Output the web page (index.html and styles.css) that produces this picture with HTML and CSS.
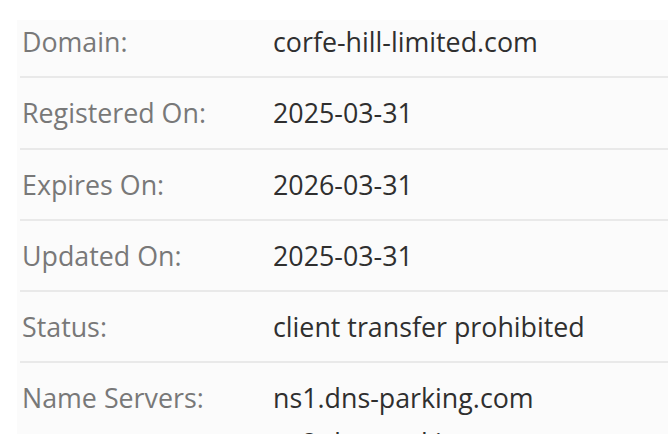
FILE: index.html
```html
<!DOCTYPE html>
<html>
<head>
<meta charset="utf-8">
<link rel="stylesheet" href="styles.css">
</head>
<body>
<div class="panel">
  <div class="row first">
    <div class="label">Domain:</div>
    <div class="value">corfe-hill-limited.com</div>
  </div>
  <div class="row">
    <div class="label">Registered On:</div>
    <div class="value">2025-03-31</div>
  </div>
  <div class="row">
    <div class="label">Expires On:</div>
    <div class="value">2026-03-31</div>
  </div>
  <div class="row">
    <div class="label">Updated On:</div>
    <div class="value">2025-03-31</div>
  </div>
  <div class="row">
    <div class="label">Status:</div>
    <div class="value">client transfer prohibited</div>
  </div>
  <div class="row">
    <div class="label">Name Servers:</div>
    <div class="value">
      <div class="ns">ns1.dns-parking.com</div>
      <div class="ns">ns2.dns-parking.com</div>
    </div>
  </div>
</div>
</body>
</html>
```
FILE: styles.css
```css
html, body {
  margin: 0;
  padding: 0;
  background: #ffffff;
  overflow: hidden;
}
body {
  font-family: "Open Sans", "Noto Sans", sans-serif;
  font-size: 26.8px;
  line-height: 37px;
}
.panel {
  margin: 20px 0 0 17px;
  padding-left: 3px;
  background: #fbfbfb;
}
.row {
  display: flex;
  padding: 16px 0 16.25px 2px;
  border-bottom: 2px solid #e9e9e9;
}
.row.first {
  padding-top: 3px;
}
.label {
  flex: 0 0 251px;
  color: #787878;
}
.value {
  color: #2f2f2f;
}
.ns + .ns {
  margin-top: 8px;
}
```
